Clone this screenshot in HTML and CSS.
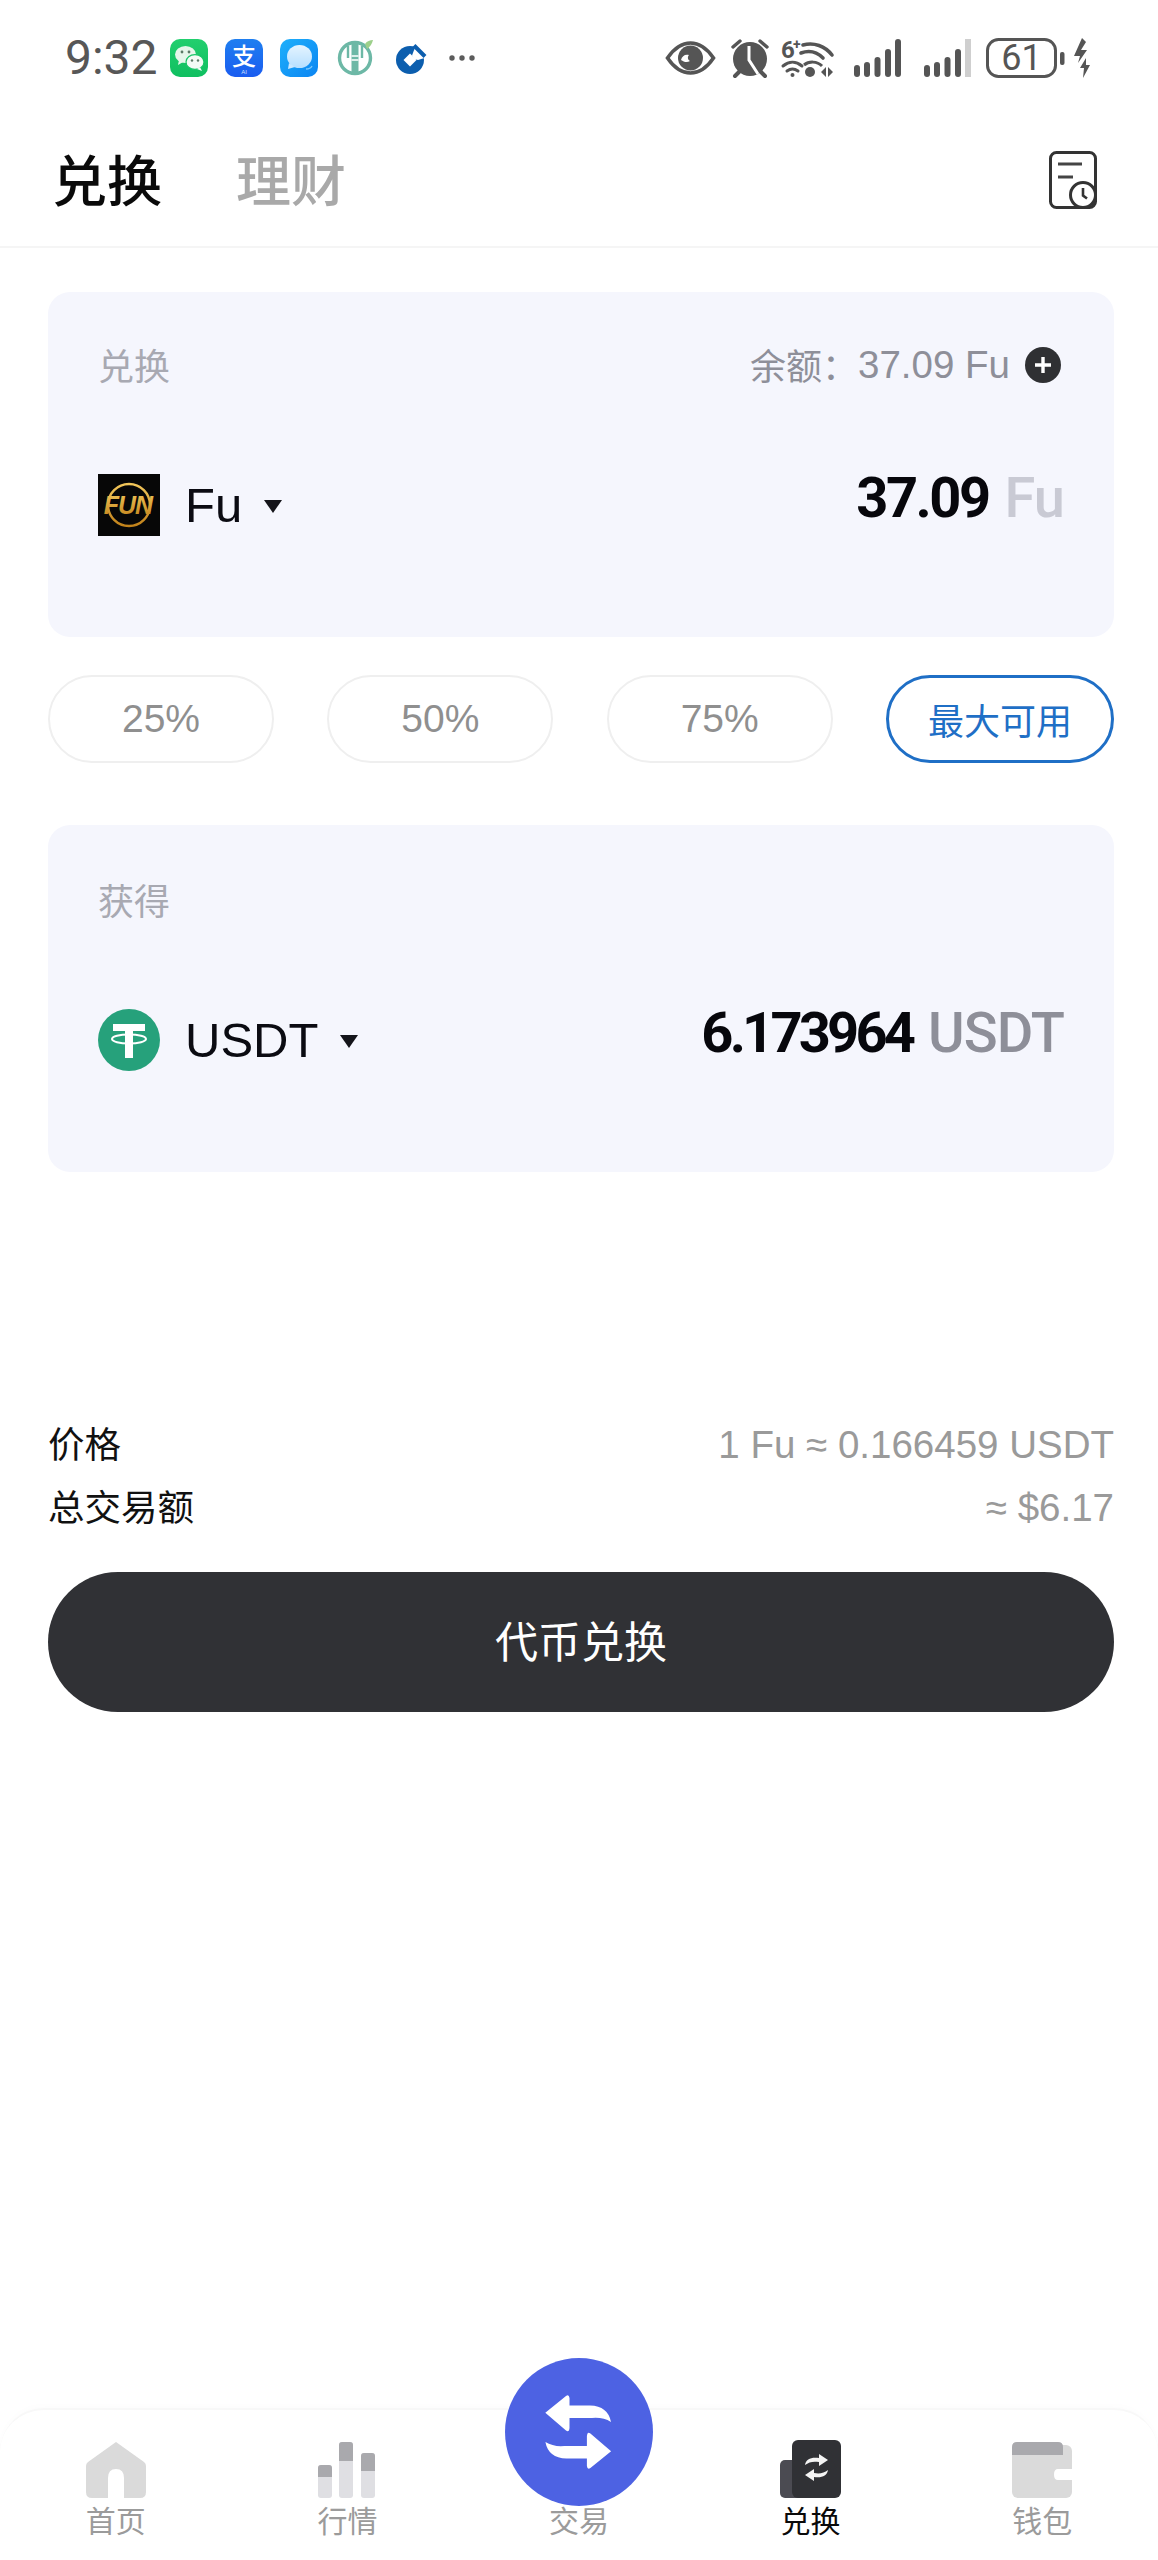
FILE: index.html
```html
<!DOCTYPE html>
<html lang="zh-CN">
<head>
<meta charset="utf-8">
<title>兑换</title>
<link rel="stylesheet" href="styles.css">
</head>
<body>
<div class="page">
  <div class="status">
    <span class="time">9:32</span>
    <div class="notif">
      <svg width="38" height="38" viewBox="0 0 38 38"><defs><linearGradient id="wg" x1="0" y1="0" x2="0" y2="1"><stop offset="0" stop-color="#22cf6e"/><stop offset="1" stop-color="#0fbf60"/></linearGradient></defs><rect width="38" height="38" rx="10" fill="url(#wg)"/><ellipse cx="15.5" cy="15.5" rx="10.5" ry="8.6" fill="#e6f6ea"/><path d="M9 21l-1 5 5-3z" fill="#e6f6ea"/><ellipse cx="25" cy="23" rx="9" ry="7.4" fill="#f4fbf5" stroke="#17c566" stroke-width="1.2"/><path d="M30 28l2 4-5-2z" fill="#f4fbf5"/><circle cx="12" cy="13" r="1.4" fill="#5c7a66"/><circle cx="19" cy="13" r="1.4" fill="#5c7a66"/><circle cx="22" cy="21.5" r="1.2" fill="#5c7a66"/><circle cx="28" cy="21.5" r="1.2" fill="#5c7a66"/></svg>
      <svg class="tall" width="38" height="38" viewBox="0 0 38 38"><defs><linearGradient id="ag" x1="0" y1="0" x2="0" y2="1"><stop offset="0" stop-color="#1f7ff0"/><stop offset="1" stop-color="#1a5cf0"/></linearGradient></defs><rect width="38" height="38" rx="10" fill="url(#ag)"/><text class="t-ali" x="19" y="26" text-anchor="middle">支</text><text class="t-ai" x="19" y="35" text-anchor="middle">AI</text></svg>
      <svg width="38" height="38" viewBox="0 0 38 38"><defs><linearGradient id="mg" x1="0" y1="0" x2="1" y2="1"><stop offset="0" stop-color="#1fb0fb"/><stop offset="1" stop-color="#0b85f2"/></linearGradient><linearGradient id="mb" x1="0" y1="0" x2="0" y2="1"><stop offset="0" stop-color="#e4f4ff"/><stop offset="1" stop-color="#b6dfff"/></linearGradient></defs><rect width="38" height="38" rx="10" fill="url(#mg)"/><ellipse cx="19.5" cy="17.5" rx="12.5" ry="11.5" fill="url(#mb)"/><path d="M9 24l-1 6 7-2z" fill="#cbe8ff"/><path d="M26 30c3 0 5-1 6-3" stroke="#7cc8fb" stroke-width="1.4" fill="none"/></svg>
      <svg width="39" height="38" viewBox="0 0 39 38"><circle cx="20" cy="19" r="15.5" fill="none" stroke="#6db8a6" stroke-width="3.4"/><path d="M20 5v29" stroke="#6db8a6" stroke-width="7" fill="none"/><path d="M13 7v12M27 7v12" stroke="#6db8a6" stroke-width="2.4" fill="none"/><path d="M16.5 17h7M16.5 21h7" stroke="#ffffff" stroke-width="1.4"/><path d="M30 5c2-3 5-4 8-4-1 4-3 7-6 9z" fill="#9dd08b"/></svg>
      <svg width="38" height="38" viewBox="0 0 38 38"><circle cx="19" cy="21" r="14" fill="#0c5eae"/><path d="M19 14.500L25.500 21L19 27.500L12.500 21Z" fill="#fff"/><path d="M21 16.500L25 6L40 17L27 21L23 20Z" fill="#fff"/><path d="M23 6.500L34 17.500" stroke="#0c5eae" stroke-width="4" fill="none"/></svg>
      <svg width="32" height="38" viewBox="0 0 32 38"><circle cx="6" cy="19" r="2.700" fill="#5c5c5c"/><circle cx="16" cy="19" r="2.700" fill="#5c5c5c"/><circle cx="26" cy="19" r="2.700" fill="#5c5c5c"/></svg>
    </div>
    <svg class="sys" width="425" height="56" viewBox="666 30 425 56">
      <path d="M667.500 58C675 47 683 43 690.500 43S706 47 713.500 58C706 69 698 73 690.500 73S675 69 667.500 58Z" fill="none" stroke="#555" stroke-width="3.600"/>
      <circle cx="690.500" cy="58" r="12.500" fill="#555"/><path d="M681 60c1-4 4-6 8-5-2 2-1 5 1 6-3 2-6 1-9-1Z" fill="#fff"/>
      <circle cx="750" cy="59" r="17" fill="#555"/><path d="M749 46v14l9 14" fill="none" stroke="#fff" stroke-width="3"/>
      <path d="M733 47l7-6M767 47l-7-6" stroke="#555" stroke-width="3.400" stroke-linecap="round"/><path d="M735 76l4-4M765 76l-4-4" stroke="#555" stroke-width="4" stroke-linecap="round"/>
      <text class="t-six" x="781" y="58">6</text><text class="t-plus" x="793" y="49">+</text>
      <path d="M803 45c11-3 22 1 29 10" fill="none" stroke="#555" stroke-width="3.600" stroke-linecap="round"/>
      <path d="M801 53c8-3 16-1 22 5" fill="none" stroke="#555" stroke-width="3.600" stroke-linecap="round"/>
      <path d="M783 66c6-5 13-5 19 0M787 71c4-3 7-3 11 0" fill="none" stroke="#555" stroke-width="3" stroke-linecap="round"/><circle cx="792.500" cy="75" r="2" fill="#555"/>
      <path d="M804 65c5-4 13-4 18 1" fill="none" stroke="#555" stroke-width="3"/>
      <circle cx="810" cy="72" r="5" fill="#555"/><path d="M821 72l5-5v10zM828 67l5 5-5 5z" fill="#555"/>
      <g fill="#555"><rect x="854" y="65" width="6" height="12" rx="3"/><rect x="864" y="62" width="6" height="15" rx="3"/><rect x="874.500" y="57" width="6" height="20" rx="3"/><rect x="885" y="49" width="6" height="28" rx="3"/><rect x="895" y="39" width="6" height="38" rx="3"/></g>
      <g fill="#555"><rect x="924" y="65" width="6" height="12" rx="3"/><rect x="934" y="62" width="6" height="15" rx="3"/><rect x="944.500" y="57" width="6" height="20" rx="3"/><rect x="955" y="49" width="6" height="28" rx="3"/></g><rect x="965" y="39" width="6" height="38" fill="#cfcfcf"/>
      <rect x="987.500" y="39.500" width="68" height="37" rx="11" fill="none" stroke="#555" stroke-width="3"/>
      <text class="t-batt" x="1021.500" y="70" text-anchor="middle">61</text>
      <rect x="1060" y="52" width="4.500" height="13" rx="2" fill="#555"/>
      <path d="M1082 38l-8 18h6l-2 7 9-13h-6l5-8z" fill="#555"/><path d="M1086 58l-6 10h4l-1 10 7-13h-4z" fill="#555"/>
    </svg>
  </div>

  <header class="head">
    <div class="tabs">
      <span class="tab tab-on">兑换</span>
      <span class="tab">理财</span>
    </div>
    <svg class="doc" width="48" height="58" viewBox="0 0 48 58"><rect x="1.500" y="1.500" width="45" height="55" rx="6" fill="#fff" stroke="#333" stroke-width="3"/><path d="M9 13h24M9 26h15" stroke="#444" stroke-width="3"/><circle cx="34" cy="44" r="12.500" fill="#fff" stroke="#333" stroke-width="3"/><path d="M34 37v7.500l4 3" fill="none" stroke="#333" stroke-width="2.600"/></svg>
  </header>

  <main class="main">
    <section class="card">
      <div class="card-top">
        <span class="label">兑换</span>
        <div class="balance">
          <span class="bal-key">余额：</span><span>37.09 Fu</span>
          <svg width="36" height="36" viewBox="0 0 36 36"><circle cx="18" cy="18" r="18" fill="#2f3033"/><path d="M18 10v16M10 18h16" stroke="#fff" stroke-width="3.400"/></svg>
        </div>
      </div>
      <div class="token-row">
        <svg width="62" height="62" viewBox="0 0 62 62"><defs><linearGradient id="gold" x1="0" y1="0" x2="0" y2="1"><stop offset="0" stop-color="#f2c65a"/><stop offset="1" stop-color="#c1821a"/></linearGradient></defs><rect width="62" height="62" fill="#070707"/><circle cx="31" cy="31" r="21" fill="none" stroke="url(#gold)" stroke-width="2.400"/><text class="t-fun" x="30" y="40" text-anchor="middle" fill="url(#gold)">FUN</text></svg>
        <span class="sym">Fu</span>
        <span class="caret"></span>
        <div class="amount"><span class="amt-num">37.09</span><span class="amt-unit amt-faint">Fu</span></div>
      </div>
    </section>

    <div class="pills">
      <span class="pill">25%</span>
      <span class="pill">50%</span>
      <span class="pill">75%</span>
      <span class="pill pill-on">最大可用</span>
    </div>

    <section class="card card-receive">
      <div class="card-top">
        <span class="label">获得</span>
      </div>
      <div class="token-row">
        <svg width="62" height="62" viewBox="0 0 62 62"><circle cx="31" cy="31" r="31" fill="#26a17b"/><path d="M15 15h32v7H35v27h-8V22H15Z" fill="#fff"/><ellipse cx="31" cy="30" rx="17" ry="4.500" fill="none" stroke="#fff" stroke-width="2"/></svg>
        <span class="sym">USDT</span>
        <span class="caret"></span>
        <div class="amount"><span class="amt-num amt-tight">6.173964</span><span class="amt-unit">USDT</span></div>
      </div>
    </section>

    <div class="info">
      <div class="info-row"><span class="info-key">价格</span><span class="info-val">1 Fu ≈ 0.166459 USDT</span></div>
      <div class="info-row"><span class="info-key">总交易额</span><span class="info-val">≈ $6.17</span></div>
    </div>

    <button class="cta">代币兑换</button>
  </main>

  <nav class="nav">
    <div class="nav-item">
      <svg width="60" height="58" viewBox="0 0 60 58"><path d="M30 2L58 22Q60 23.500 60 26V52Q60 58 54 58H38V38Q38 29 30 29T22 38V58H6Q0 58 0 52V26Q0 23.500 2 22Z" fill="#dadada"/></svg>
      <span>首页</span>
    </div>
    <div class="nav-item">
      <svg width="58" height="58" viewBox="0 0 58 58"><g fill="#dfdfe3"><rect x="0" y="25" width="14" height="33" rx="3"/><rect x="21" y="2" width="14" height="56" rx="3"/><rect x="43" y="13" width="14" height="45" rx="3"/></g><g fill="#a9a9ad"><path d="M0 37V28q0-3 3-3h8q3 0 3 3v9Z"/><path d="M21 21V5q0-3 3-3h8q3 0 3 3v16Z"/><path d="M43 31V16q0-3 3-3h8q3 0 3 3v15Z"/></g></svg>
      <span>行情</span>
    </div>
    <div class="nav-item">
      <div class="fab">
        <svg width="148" height="148" viewBox="0 0 148 148"><path d="M40.300 54.700L61 38Q64 36 64.500 40V47.500H85Q103 48 106 64Q98 59 87 60H64.500V70Q64 75 61 72.500Z" fill="#fff"/><path d="M40.300 54.700L61 38Q64 36 64.500 40V47.500H85Q103 48 106 64Q98 59 87 60H64.500V70Q64 75 61 72.500Z" fill="#fff" transform="rotate(180 73.200 74)"/></svg>
      </div>
      <div class="nav-slot"></div>
      <span>交易</span>
    </div>
    <div class="nav-item nav-on">
      <svg width="61" height="58" viewBox="0 0 61 58"><rect x="0" y="20" width="30" height="38" rx="5" fill="#4b4b52"/><rect x="12" y="0" width="49" height="58" rx="6" fill="#303135"/><path d="M25 25c1-6 6-8 14-7v-4l9 6-9 6v-4c-6-1-10 0-14 3Z" fill="#f4f4f4"/><path d="M48 30c-1 6-6 8-14 7v4l-9-6 9-6v4c6 1 10 0 14-3Z" fill="#f4f4f4"/></svg>
      <span>兑换</span>
    </div>
    <div class="nav-item">
      <svg width="60" height="58" viewBox="0 0 60 58"><rect x="0" y="5" width="60" height="53" rx="6" fill="#dadada"/><path d="M0 15V7q0-5 5-5h41q5 0 5 5v8Z" fill="#a9a9ad"/><path d="M60 29H46q-4 0-4 5.500T46 40H60Z" fill="#fff"/></svg>
      <span>钱包</span>
    </div>
  </nav>
</div>
</body>
</html>
```
FILE: styles.css
```css
* { box-sizing: border-box; }
html, body { margin: 0; padding: 0; background: #fff; }
body { font-family: "Liberation Sans", "Noto Sans CJK SC", sans-serif; color: #0b0b0f; }
.page { width: 1158px; height: 2560px; display: flex; flex-direction: column; overflow: hidden; background: #fff; }
svg { overflow: visible; flex: none; }

/* status bar */
.status { height: 116px; flex: none; display: flex; align-items: center; padding: 0 67px 0 65px; }
.time { font-family: Roboto, sans-serif; font-size: 48px; color: #575757; line-height: 1; margin-right: 14px; width: 91px; white-space: nowrap; }
.notif { display: flex; align-items: center; gap: 17px; }
.sys { margin-left: auto; }
.t-ali { font-family: "Noto Sans CJK SC", sans-serif; font-size: 24px; font-weight: 500; fill: #fff; }
.t-ai { font-family: "Liberation Sans", sans-serif; font-size: 6px; fill: #cfe0ff; }
.t-six { font-family: Roboto, sans-serif; font-size: 24px; font-weight: 700; fill: #555; }
.t-plus { font-family: Roboto, sans-serif; font-size: 14px; font-weight: 700; fill: #555; }
.t-batt { font-family: Roboto, sans-serif; font-size: 36px; fill: #555; }
.t-fun { font-family: "Liberation Sans", sans-serif; font-size: 25px; font-weight: 700; font-style: italic; letter-spacing: -1px; }

/* header */
.head { height: 132px; flex: none; display: flex; align-items: center; justify-content: space-between; padding: 0 61px 8px 52px; border-bottom: 2px solid #f5f5f5; }
.tabs { display: flex; gap: 74px; }
.tab { font-family: "Noto Sans CJK SC", sans-serif; font-size: 55px; line-height: 60px; font-weight: 500; color: #a9a9a9; }
.tab-on { color: #0a0a0a; }
.doc { margin-top: 6px; }

/* main */
.main { flex: 1; padding: 44px 44px 0 48px; display: flex; flex-direction: column; }
.card { background: #f5f6fd; border-radius: 22px; padding: 50px 50px 101px; }
.card-receive { padding-top: 52px; margin-top: 62px; }
.card-top { height: 46px; display: flex; align-items: center; justify-content: space-between; }
.label { font-size: 36px; color: #a8a9b2; font-family: "Noto Sans CJK SC", sans-serif; margin-bottom: 3px; }
.balance { display: flex; align-items: center; font-size: 38.500px; color: #8e8f99; }
.bal-key { font-family: "Noto Sans CJK SC", sans-serif; font-size: 36px; margin-bottom: 3px; }
.balance svg { margin: 0 3px 0 15px; }
.token-row { margin-top: 86px; height: 62px; display: flex; align-items: center; }
.sym { font-size: 49px; margin-left: 25px; color: #0b0b12; }
.caret { width: 0; height: 0; margin-left: 22px; margin-top: 2px; border-left: 9px solid transparent; border-right: 9px solid transparent; border-top: 13px solid #14141a; }
.amount { margin-left: auto; display: flex; align-items: baseline; gap: 16px; font-family: Roboto, sans-serif; font-size: 56px; line-height: 62px; padding-bottom: 14px; }
.amt-num { font-weight: 700; color: #07070c; letter-spacing: -2.500px; }
.amt-tight { letter-spacing: -3.800px; }
.amt-unit { font-weight: 500; color: #8e8f99; letter-spacing: -1px; }
.amt-faint { color: #c9cad4; }

/* percent pills */
.pills { display: flex; justify-content: space-between; margin-top: 38px; }
.pill { width: 226px; height: 88px; border: 2px solid #efefef; border-radius: 44px; display: flex; align-items: center; justify-content: center; font-size: 39px; color: #8f8f8f; }
.pill-on { width: 228px; border: 3px solid #1f6fc6; color: #1f6fc6; font-size: 36px; font-family: "Noto Sans CJK SC", sans-serif; }

/* info rows */
.info { margin-top: 253px; display: flex; flex-direction: column; gap: 23px; }
.info-row { height: 40px; display: flex; align-items: center; justify-content: space-between; color: #111; }
.info-key { font-family: "Noto Sans CJK SC", sans-serif; font-size: 36.500px; margin-bottom: 6px; }
.info-val { font-size: 38.500px; color: #9a9a9a; }

.cta { margin-top: 44px; height: 140px; width: 100%; border: 0; border-radius: 70px; background: #303135; color: #fff; font-family: "Noto Sans CJK SC", sans-serif; font-size: 43px; padding: 0 0 6px; }

/* bottom nav */
.nav { height: 152px; flex: none; display: grid; grid-template-columns: repeat(5, 1fr); padding: 30px 0 0; background: #fff; border-radius: 44px 44px 0 0; border-top: 2px solid #f8f8f8; box-shadow: 0 -3px 6px rgba(0, 0, 0, 0.012); }
.nav-item { position: relative; display: flex; flex-direction: column; align-items: center; font-family: "Noto Sans CJK SC", sans-serif; font-size: 30px; line-height: 34px; color: #9b9b9b; }
.nav-item span { margin-top: 4px; }
.nav-on { color: #0a0a0a; }
.nav-slot { height: 58px; }
.fab { position: absolute; left: 50%; top: -82px; width: 148px; height: 148px; margin-left: -74px; border-radius: 50%; background: #4d62e3; }
```
